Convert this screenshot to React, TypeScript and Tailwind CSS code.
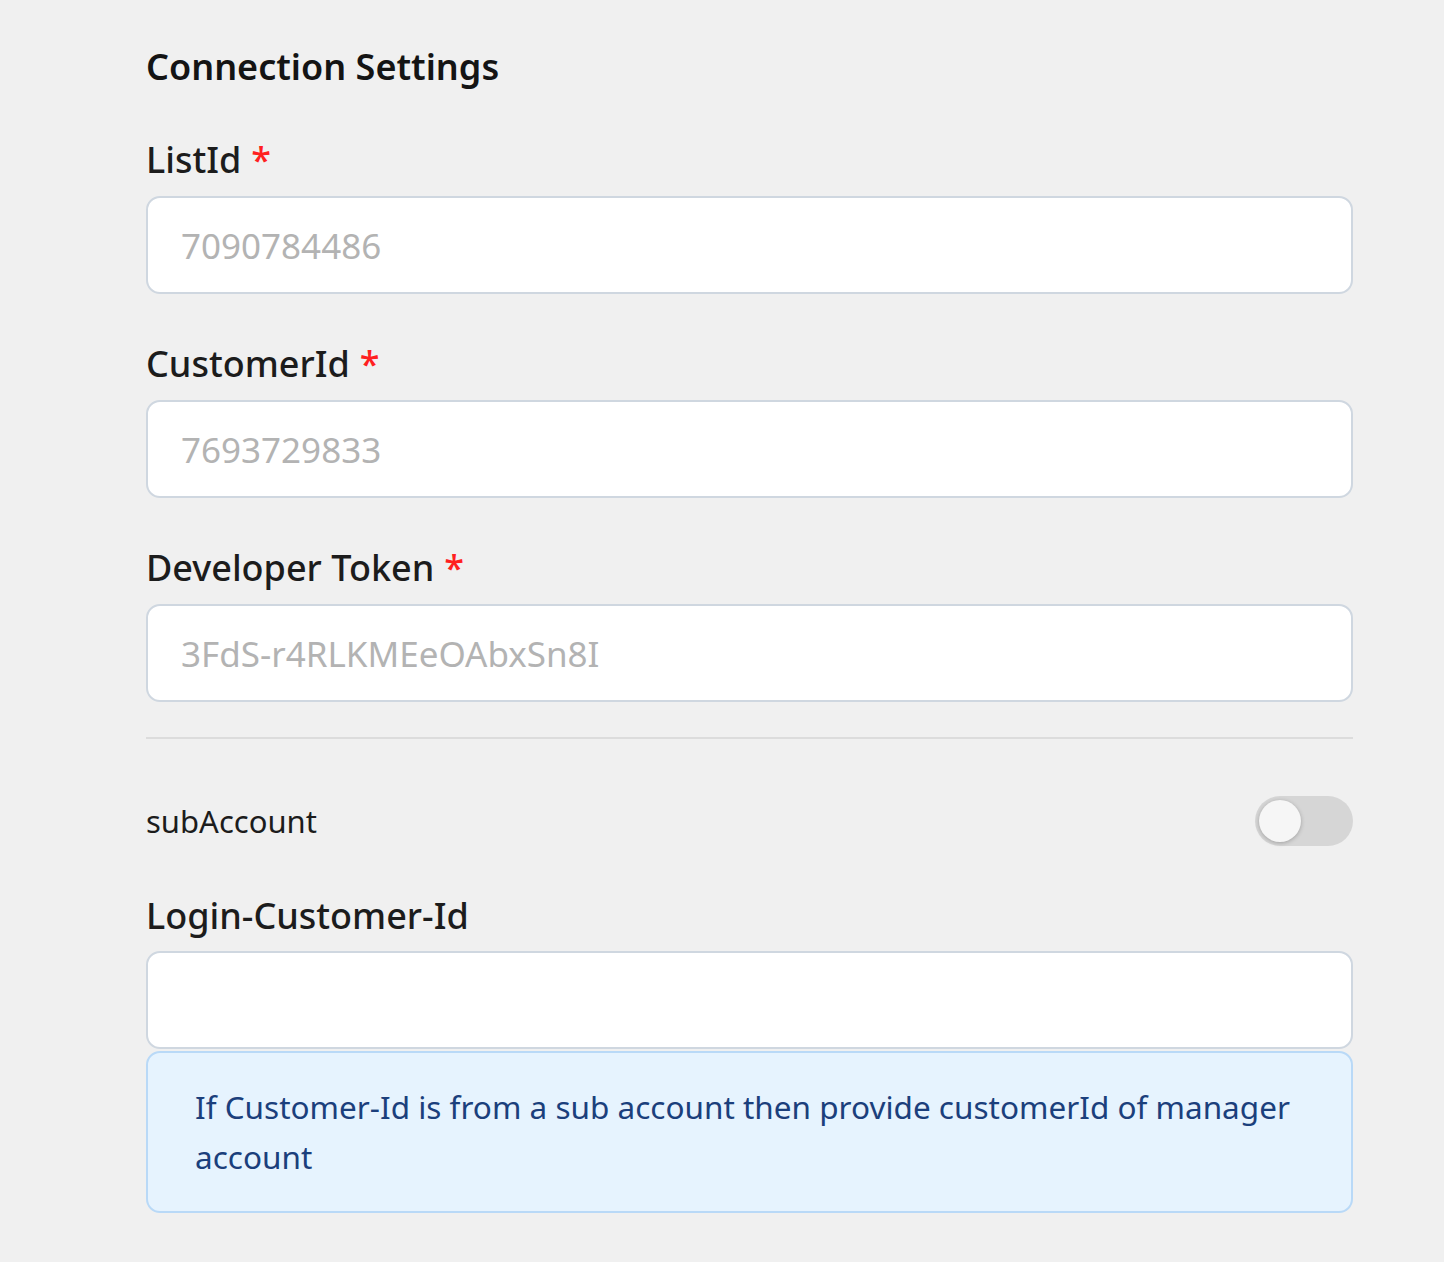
import { useState } from "react";

const FONT = "font-['Noto_Sans','Open_Sans',sans-serif]";

type FieldProps = {
  label: string;
  placeholder?: string;
  required?: boolean;
};

function Field({ label, placeholder, required }: FieldProps) {
  return (
    <div className="flex flex-col">
      <label className="flex items-center gap-[10px] text-[36px] leading-[51px] font-medium text-[#1c1c1c]">
        {label}
        {required && <span className="text-[#ff2020]">*</span>}
      </label>
      <input
        type="text"
        placeholder={placeholder}
        className="mt-[11px] h-[98px] w-full rounded-[14px] border-2 border-[#cfd7e0] bg-white px-[33px] text-[35px] text-[#222] placeholder:text-[#b3b3b3] outline-none"
      />
    </div>
  );
}

export default function App() {
  const [sub, setSub] = useState(false);

  return (
    <div className={`${FONT} min-h-[1262px] w-full bg-[#f0f0f0]`}>
      <div className="ml-[146px] w-[1207px] pt-[41px] pb-[49px]">
        <h2 className="text-[36px] leading-[51px] font-semibold text-[#141414]">
          Connection Settings
        </h2>

        <div className="mt-[42px] flex flex-col gap-[44px]">
          <Field label="ListId" placeholder="7090784486" required />
          <Field label="CustomerId" placeholder="7693729833" required />
          <Field label="Developer Token" placeholder="3FdS-r4RLKMEeOAbxSn8I" required />
        </div>

        <div className="mt-[35px] h-[2px] w-full bg-[#dcdcdc]" />

        <div className="mt-[57px] flex h-[50px] items-center justify-between">
          <span className="text-[31px] text-[#1c1c1c]">subAccount</span>
          <button
            type="button"
            role="switch"
            aria-checked={sub}
            onClick={() => setSub(!sub)}
            className={
              sub
                ? "relative h-[50px] w-[98px] rounded-full bg-[#4a90e2]"
                : "relative h-[50px] w-[98px] rounded-full bg-[#d6d6d6]"
            }
          >
            <span
              className={
                sub
                  ? "absolute top-[4px] left-[52px] h-[42px] w-[42px] rounded-full bg-[#f6f6f6] shadow-[0_1px_4px_rgba(0,0,0,0.25)]"
                  : "absolute top-[4px] left-[4px] h-[42px] w-[42px] rounded-full bg-[#f6f6f6] shadow-[0_1px_4px_rgba(0,0,0,0.25)]"
              }
            />
          </button>
        </div>

        <div className="mt-[44px] flex flex-col">
          <label className="text-[36px] leading-[51px] font-medium text-[#1c1c1c]">
            Login-Customer-Id
          </label>
          <input
            type="text"
            className="mt-[10px] h-[98px] w-full rounded-[14px] border-2 border-[#cfd7e0] bg-white px-[33px] text-[35px] text-[#222] outline-none"
          />
          <div className="mt-[2px] rounded-[14px] border-2 border-[#b9d9f7] bg-[#e6f3fe] px-[47px] py-[29px] text-[31.5px] leading-[50px] text-[#1b3f7c]">
            If Customer-Id is from a sub account then provide customerId of manager account
          </div>
        </div>
      </div>
    </div>
  );
}
